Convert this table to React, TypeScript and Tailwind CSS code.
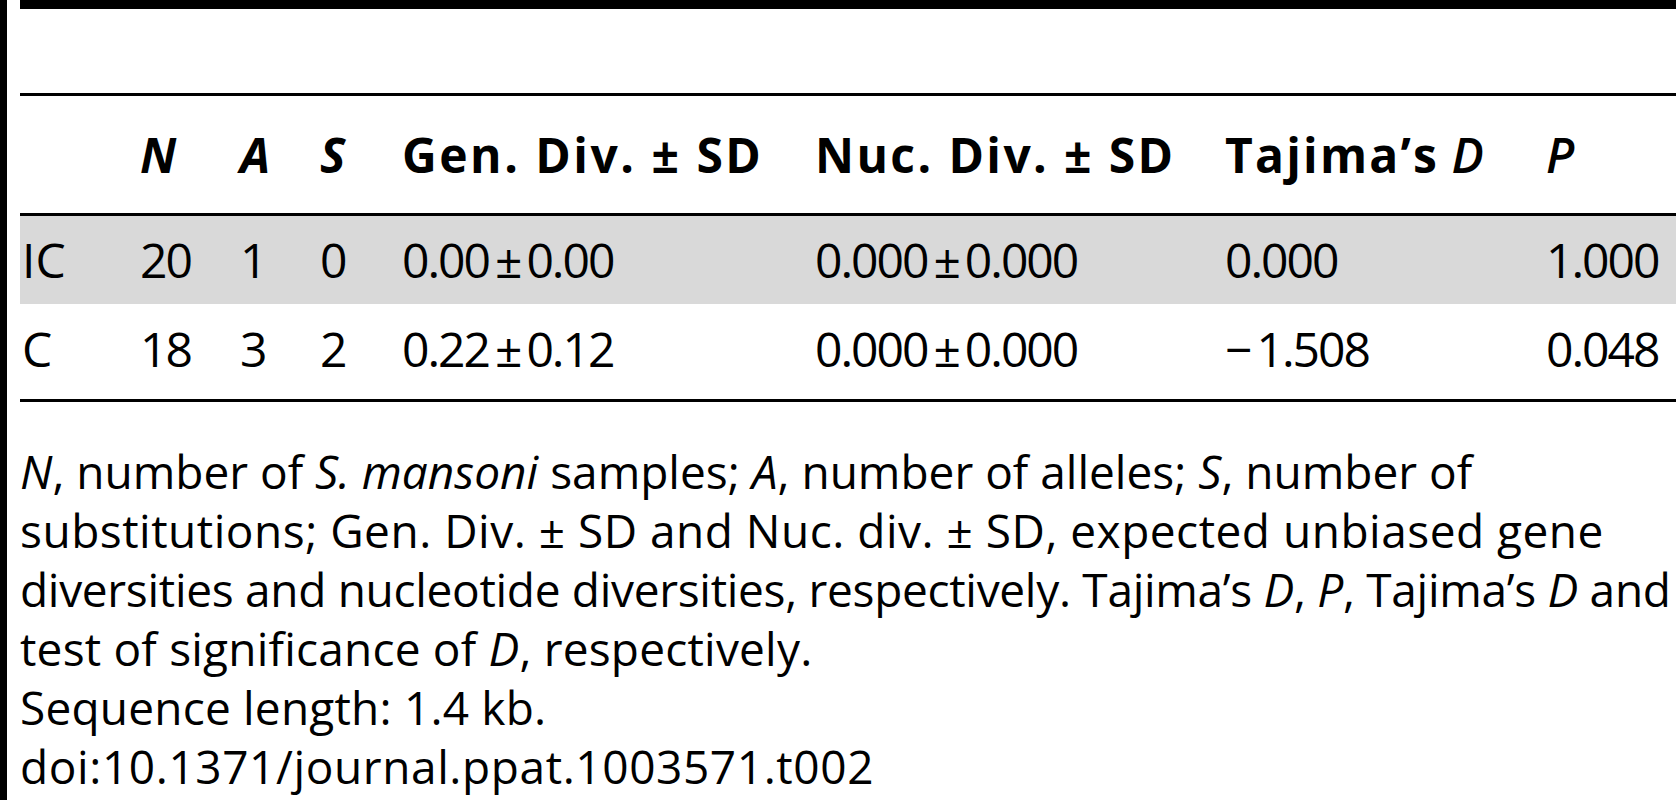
const grid =
  "grid grid-cols-[120px_100px_80px_82px_413px_410px_321px_130px] items-center";

type Row = { site: string; n: string; a: string; s: string; gen: string; nuc: string; taj: string; p: string };

const rows: Row[] = [
  { site: "IC", n: "20", a: "1", s: "0", gen: "0.00±0.00", nuc: "0.000±0.000", taj: "0.000", p: "1.000" },
  { site: "C", n: "18", a: "3", s: "2", gen: "0.22±0.12", nuc: "0.000±0.000", taj: "−1.508", p: "0.048" },
];

// value ± deviation, with a little air round the sign as in the print
function PlusMinus({ value }: { value: string }) {
  const [v, sd] = value.split("±");
  return (
    <div className="whitespace-nowrap">
      {v}
      <span className="px-[6px]">±</span>
      {sd}
    </div>
  );
}

function Signed({ value }: { value: string }) {
  if (!value.startsWith("−")) return <div>{value}</div>;
  return (
    <div className="whitespace-nowrap">
      <span className="pr-[6px]">−</span>
      {value.slice(1)}
    </div>
  );
}

function DataRow({ row, className }: { row: Row; className: string }) {
  return (
    <div className={`${grid} tracking-[-2px] ${className}`}>
      <div className="pl-[2px] tracking-normal">{row.site}</div>
      <div>{row.n}</div>
      <div>{row.a}</div>
      <div>{row.s}</div>
      <PlusMinus value={row.gen} />
      <PlusMinus value={row.nuc} />
      <Signed value={row.taj} />
      <div>{row.p}</div>
    </div>
  );
}

export default function App() {
  return (
    <div className="flex h-[800px] w-[1676px] overflow-hidden bg-white font-['Open_Sans',sans-serif] text-[48px] text-black">
      {/* left rule */}
      <div className="w-[7px] shrink-0 bg-black" />

      <div className="ml-[13px] min-w-0 flex-1">
        {/* empty title band between the heavy and thin rules */}
        <div className="h-[96px] border-t-[9px] border-b-[3px] border-black" />

        {/* column headings */}
        <div className={`${grid} h-[120px] border-b-[3px] border-black`}>
          <div />
          <div className="font-bold italic">N</div>
          <div className="font-bold italic">A</div>
          <div className="font-bold italic">S</div>
          <div className="font-bold whitespace-nowrap tracking-[2.5px]">Gen. Div. ± SD</div>
          <div className="font-bold whitespace-nowrap tracking-[2.4px]">Nuc. Div. ± SD</div>
          <div className="whitespace-nowrap">
            <span className="font-bold tracking-[2.2px]">Tajima’s</span>{" "}
            <span className="font-semibold italic">D</span>
          </div>
          <div className="font-semibold italic">P</div>
        </div>

        <DataRow row={rows[0]} className="h-[88px] bg-[#d9d9d9]" />
        <DataRow row={rows[1]} className="h-[98px] border-b-[3px] border-black pb-[6px]" />

        {/* footnotes */}
        <div className="pt-[40px] text-[46px] leading-[59px] whitespace-nowrap">
          <div>
            <i>N</i>, number of <i>S. mansoni</i> samples; <i>A</i>, number of alleles; <i>S</i>, number of
          </div>
          <div className="tracking-[0.5px]">
            substitutions; Gen. Div. ± SD and Nuc. div. ± SD, expected unbiased gene
          </div>
          <div className="tracking-[-0.3px]">
            diversities and nucleotide diversities, respectively. Tajima’s <i>D</i>, <i>P</i>, Tajima’s <i>D</i> and
          </div>
          <div className="tracking-[0.2px]">
            test of significance of <i>D</i>, respectively.
          </div>
          <div className="tracking-[0.2px]">Sequence length: 1.4 kb.</div>
          <div className="tracking-[0.6px]">doi:10.1371/journal.ppat.1003571.t002</div>
        </div>
      </div>
    </div>
  );
}
